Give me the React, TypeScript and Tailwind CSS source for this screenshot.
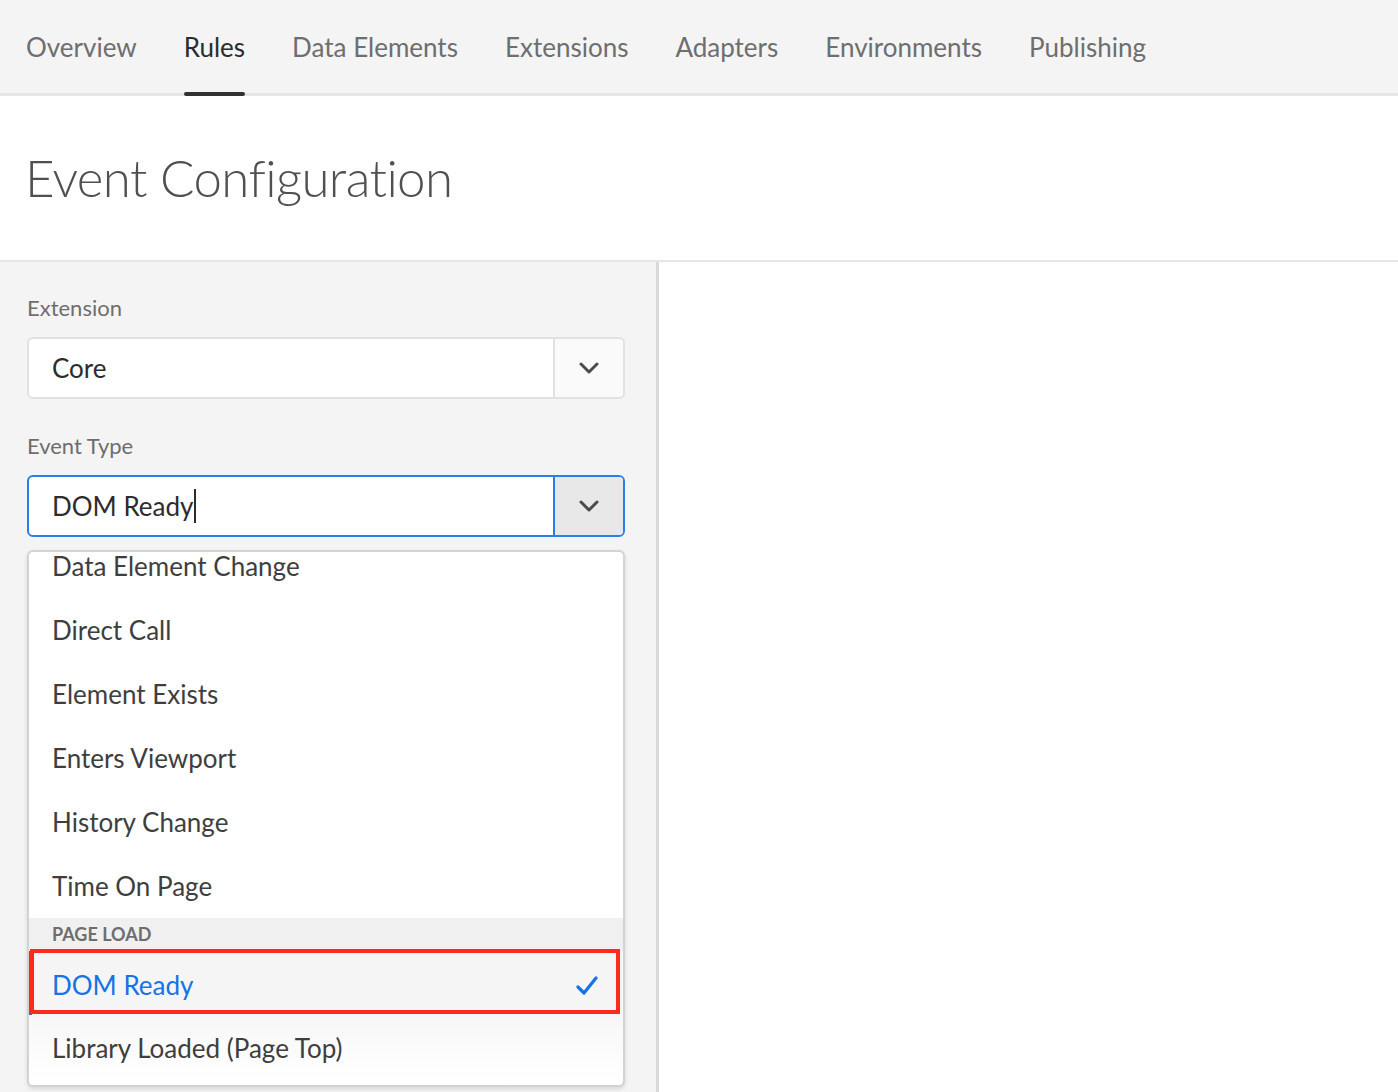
import React from 'react';

const tabs = ['Overview', 'Rules', 'Data Elements', 'Extensions', 'Adapters', 'Environments', 'Publishing'];

const options = ['Data Element Change', 'Direct Call', 'Element Exists', 'Enters Viewport', 'History Change', 'Time On Page'];

function Chevron() {
  return (
    <svg width="20" height="12" viewBox="0 0 20 12" fill="none">
      <path d="M2 2l8 8 8-8" stroke="#4b4b4b" strokeWidth="3" strokeLinecap="round" strokeLinejoin="round" />
    </svg>
  );
}

function Check() {
  return (
    <svg width="22" height="20" viewBox="0 0 22 20" fill="none">
      <path d="M2 11l6 6L20 2" stroke="#1473e6" strokeWidth="3.2" strokeLinecap="round" strokeLinejoin="round" />
    </svg>
  );
}

export default function App() {
  return (
    <div className="w-[1398px] h-[1092px] overflow-hidden bg-white font-['Lato',sans-serif] text-[#3e3e3e]">
      {/* top nav */}
      <div className="h-[96px] bg-[#f4f4f4] border-b-[3px] border-[#e6e6e6] flex items-stretch gap-[47px] px-[26px]">
        {tabs.map((t) => (
          <div key={t} className="relative flex items-center pt-[1px]">
            <span className={`text-[26px] ${t === 'Rules' ? 'text-[#2c2c2c]' : 'text-[#6e6e6e]'}`}>{t}</span>
            {t === 'Rules' && (
              <div className="absolute left-0 right-0 bottom-[-3px] h-[4px] rounded-sm bg-[#323232]" />
            )}
          </div>
        ))}
      </div>

      {/* page title */}
      <div className="h-[166px] border-b-2 border-[#e6e6e6] flex items-center px-[25px]">
        <h1 className="text-[51px] font-light text-[#505050] tracking-[-0.6px]">Event Configuration</h1>
      </div>

      <div className="flex h-[830px]">
        <div className="w-[659px] shrink-0 bg-[#f4f4f4] border-r-[3px] border-[#dadada] pl-[27px] pr-[31px] pt-[31px]">
          <div className="text-[22px] leading-[30px] text-[#6e6e6e]">Extension</div>
          <div className="mt-[14px] h-[62px] flex rounded-md border-2 border-[#e1e1e1] bg-white overflow-hidden">
            <div className="flex-1 flex items-center pl-[23px] text-[26px] text-[#2c2c2c]">Core</div>
            <div className="w-[70px] flex items-center justify-center bg-[#fafafa] border-l-2 border-[#e1e1e1]">
              <Chevron />
            </div>
          </div>

          <div className="mt-[32px] text-[22px] leading-[30px] text-[#6e6e6e]">Event Type</div>
          <div className="mt-[14px] h-[62px] flex rounded-md border-2 border-[#2680eb] bg-white overflow-hidden">
            <div className="flex-1 flex items-center pl-[23px] text-[26px] text-[#2c2c2c]">
              DOM Ready<span className="inline-block w-[2px] h-[34px] bg-[#2c2c2c] ml-[1px]" />
            </div>
            <div className="w-[70px] flex items-center justify-center bg-[#e8e8e8] border-l-2 border-[#2680eb]">
              <Chevron />
            </div>
          </div>

          {/* open dropdown */}
          <div className="mt-[13px] h-[537px] rounded-md border-2 border-[#d3d3d3] bg-white shadow-[0_2px_4px_rgba(0,0,0,0.12)] overflow-hidden">
            <div className="-mt-[18px]">
              {options.map((o) => (
                <div key={o} className="h-[64px] flex items-center pl-[23px] text-[26px]">{o}</div>
              ))}
              <div className="h-[33px] flex items-center pl-[23px] bg-[#f0f0f0] text-[18px] font-bold text-[#6e6e6e]">PAGE LOAD</div>
              <div className="relative h-[64px] bg-[#f5f5f5]">
                <div className="absolute left-0 top-0 bottom-0 w-[3px] bg-[#1473e6]" />
                <div className="absolute left-[1px] right-[3px] top-[-2px] bottom-[1px] border-[4px] border-[#ff2a1f] flex items-center justify-between pl-[18px] pr-[18px] pt-[8px]">
                  <span className="text-[26px] text-[#1473e6]">DOM Ready</span>
                  <Check />
                </div>
              </div>
              <div className="h-[66px] flex items-center pl-[23px] text-[26px] bg-gradient-to-b from-[#f7f7f7] to-white">Library Loaded (Page Top)</div>
            </div>
          </div>
        </div>
        <div className="flex-1 bg-white" />
      </div>
    </div>
  );
}
